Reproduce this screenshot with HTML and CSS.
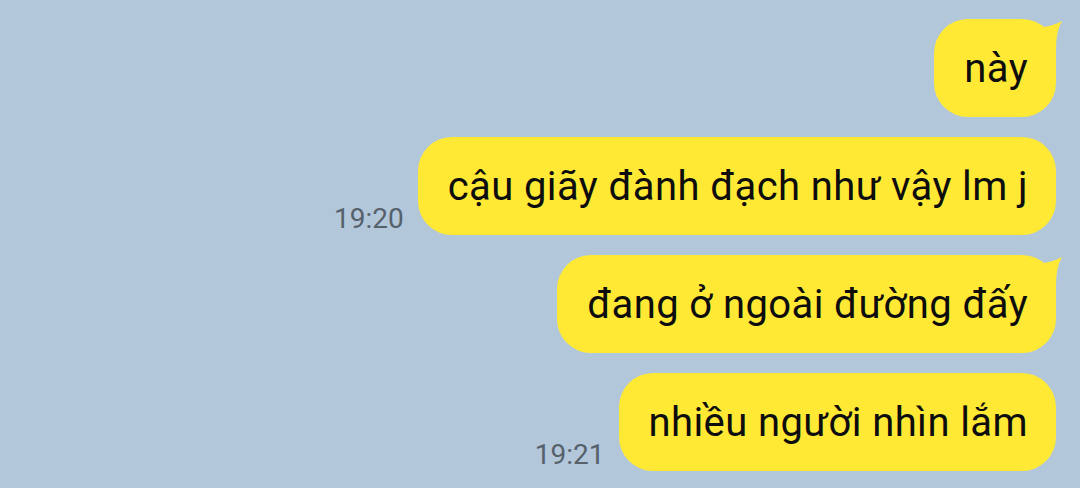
FILE: index.html
```html
<!DOCTYPE html>
<html lang="vi">
<head>
<meta charset="utf-8">
<link rel="stylesheet" href="styles.css">
</head>
<body>
<div class="chat">
  <div class="row">
    <div class="bubble">này<svg class="tail" width="36" height="40" viewBox="0 0 36 40"><path d="M13 8 Q23 7 32 2 Q26 12 26 30 L26 40 L0 40 L0 20 Z"/></svg></div>
  </div>
  <div class="row">
    <span class="time">19:20</span>
    <div class="bubble">cậu giãy đành đạch như vậy lm j</div>
  </div>
  <div class="row">
    <div class="bubble">đang ở ngoài đường đấy<svg class="tail" width="36" height="40" viewBox="0 0 36 40"><path d="M13 8 Q23 7 32 2 Q26 12 26 30 L26 40 L0 40 L0 20 Z"/></svg></div>
  </div>
  <div class="row">
    <span class="time">19:21</span>
    <div class="bubble">nhiều người nhìn lắm</div>
  </div>
</div>
</body>
</html>
```

FILE: styles.css
```css
html, body {
  margin: 0;
  padding: 0;
  background: #b2c7da;
  width: 1080px;
  height: 488px;
  overflow: hidden;
}
.chat {
  display: flex;
  flex-direction: column;
  align-items: flex-end;
  gap: 20px;
  padding: 19px 24px 0 0;
  font-family: Roboto, "Noto Sans", sans-serif;
}
.row {
  display: flex;
  align-items: flex-end;
  gap: 14px;
}
.bubble {
  position: relative;
  background: #ffe935;
  color: #0d0d0d;
  font-size: 40px;
  letter-spacing: 0.4px;
  line-height: 54px;
  height: 98px;
  box-sizing: border-box;
  padding: 23px 28px 21px 30px;
  border-radius: 34px;
  white-space: nowrap;
}
.tail {
  position: absolute;
  top: 0;
  right: -10px;
  fill: #ffe935;
}
.time {
  font-size: 28px;
  line-height: 32px;
  color: #56616c;
  margin-bottom: 0;
}
```
